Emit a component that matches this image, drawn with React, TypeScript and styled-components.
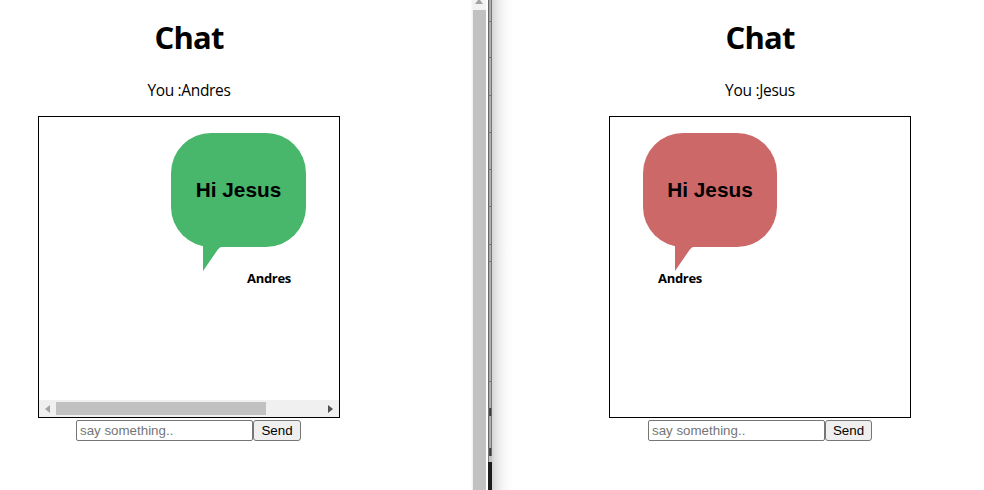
import React from 'react';
import styled, { createGlobalStyle } from 'styled-components';

const GlobalStyle = createGlobalStyle`
  * { box-sizing: border-box; }
  body { margin: 0; background: #fff; color: #000; font-family: 'Open Sans', 'Noto Sans', sans-serif; overflow: hidden; }
`;

const Desktop = styled.div`
  display: grid;
  grid-template-columns: 471px 17px 4px 492px;
  height: 490px;
  overflow: hidden;
`;

const Pane = styled.main<{ $inset: number; $shadow?: boolean }>`
  padding-left: ${p => p.$inset}px;
  background: ${p => (p.$shadow
    ? 'linear-gradient(90deg, #d4d4d4 0, #e4e4e4 4px, #f2f2f2 9px, #fbfbfb 15px, #fff 21px)'
    : '#fff')};
`;

const Column = styled.div`
  width: 302px;
  display: flex;
  flex-direction: column;
  align-items: center;
`;

const Title = styled.h1`
  margin: 15px 0 0;
  height: 44px;
  font-size: 31px;
  line-height: 44px;
  font-weight: 700;
  letter-spacing: -0.8px;
`;

const You = styled.p<{ $tracking: number }>`
  margin: 20px 0 0;
  height: 37px;
  font-size: 15.5px;
  line-height: 22px;
  letter-spacing: ${p => p.$tracking}px;
  white-space: nowrap;
`;

const ChatBox = styled.section`
  width: 302px;
  height: 302px;
  border: 1px solid #000;
  display: flex;
  flex-direction: column;
`;

const Messages = styled.div<{ $mine: boolean }>`
  flex: 1;
  display: flex;
  flex-direction: column;
  align-items: ${p => (p.$mine ? 'flex-end' : 'flex-start')};
  padding: 16px 33px 0;
`;

const Bubble = styled.div<{ $mine: boolean }>`
  position: relative;
  width: ${p => (p.$mine ? 135 : 134)}px;
  height: 114px;
  border-radius: 40px;
  background: ${p => (p.$mine ? '#48b66b' : '#cc6868')};
  color: ${p => (p.$mine ? '#48b66b' : '#cc6868')};
  display: flex;
  align-items: center;
  justify-content: center;
`;

const BubbleText = styled.span`
  color: #000;
  font: 700 20.8px/24px 'Liberation Sans', Arial, sans-serif;
  white-space: nowrap;
`;

const Tail = styled.svg`
  position: absolute;
  left: 32px;
  top: 110px;
`;

const Author = styled.span`
  margin: 21px 15px 0;
  font: 700 13px/20px 'Open Sans', 'Noto Sans', sans-serif;
  letter-spacing: -0.3px;
`;

const HorizontalBar = styled.div`
  height: 17px;
  background: #f0f0f0;
  display: grid;
  grid-template-columns: 17px 210px 1fr 17px;
  align-items: center;
  justify-items: center;
`;

const HorizontalThumb = styled.div`
  width: 210px;
  height: 13px;
  background: #c1c1c1;
`;

const Form = styled.div<{ $mine: boolean }>`
  margin: 2px ${p => (p.$mine ? 1 : 0)}px 0 0;
  display: flex;
  height: 21px;
`;

const TextInput = styled.input`
  width: 177px;
  height: 21px;
  margin: 0;
  padding: 1px 3px;
  border: 1px solid #767676;
  border-radius: 2px;
  outline: none;
  background: #fff;
  font: 13.333px 'Liberation Sans', Arial, sans-serif;
  &::placeholder { color: #757575; opacity: 1; }
`;

const SendButton = styled.button<{ $width: number }>`
  width: ${p => p.$width}px;
  height: 21px;
  margin: 0;
  padding: 0;
  border: 1px solid #767676;
  border-radius: 3px;
  background: #efefef;
  color: #000;
  font: 13.333px 'Liberation Sans', Arial, sans-serif;
`;

const VerticalBar = styled.div`
  background: #f2f2f2;
  border-right: 2px solid #fff;
  border-left: 1px solid #fafafa;
  display: flex;
  flex-direction: column;
  align-items: center;
`;

const UpCap = styled.div`
  height: 10px;
  display: flex;
  align-items: flex-start;
`;

const VerticalThumb = styled.div`
  width: 13px;
  flex: 1;
  background: #c1c1c1;
`;

const WindowEdge = styled.div`
  display: flex;
  flex-direction: column;
`;

const EdgePart = styled.div<{ $h: number; $tone?: 'dark' | 'mark' | 'pale' }>`
  flex: 0 0 ${p => p.$h}px;
  background: ${p => {
    if (p.$tone === 'dark') return '#1c1c1c';
    if (p.$tone === 'mark') return 'linear-gradient(90deg, #777 1px, #56524c 1px, #34363a 3px, #696969 3px)';
    if (p.$tone === 'pale') return 'linear-gradient(90deg, #777 1px, #c4c4c4 1px)';
    return 'linear-gradient(90deg, #666 1px, #a9a9a9 1px, #b0b0b0 3px, #777 3px)';
  }};
`;

const EdgeTick = styled.div`
  flex: 0 0 1px;
  background: #747474;
`;

const segments = [21, 35, 37, 36, 36, 36, 37, 16, 119, 26];

function BubbleTail() {
  return (
    <Tail width="22" height="29" viewBox="0 0 22 29">
      <path d="M0 0H22V3.5H19Q16.5 4 14.5 7L0 28Z" fill="currentColor" />
    </Tail>
  );
}

function Chat({ user, mine }: { user: string; mine: boolean }) {
  return (
    <Column>
      <Title>Chat</Title>
      <You $tracking={mine ? -0.35 : -0.3}>You :{user}</You>
      <ChatBox>
        <Messages $mine={mine}>
          <Bubble $mine={mine}>
            <BubbleText>Hi Jesus</BubbleText>
            <BubbleTail />
          </Bubble>
          <Author>Andres</Author>
        </Messages>
        {mine && (
          <HorizontalBar>
            <svg width="5" height="8" viewBox="0 0 5 8"><path d="M5 0V8L0 4Z" fill="#a3a3a3" /></svg>
            <HorizontalThumb />
            <span />
            <svg width="5" height="8" viewBox="0 0 5 8"><path d="M0 0V8L5 4Z" fill="#505050" /></svg>
          </HorizontalBar>
        )}
      </ChatBox>
      <Form $mine={mine}>
        <TextInput placeholder="say something.." />
        <SendButton $width={mine ? 48 : 47}>Send</SendButton>
      </Form>
    </Column>
  );
}

export default function App() {
  return (
    <>
      <GlobalStyle />
      <Desktop>
        <Pane $inset={38}><Chat user="Andres" mine /></Pane>
        <VerticalBar>
          <UpCap><svg width="8" height="4" viewBox="0 0 8 4"><path d="M3 0H5L8 4H0Z" fill="#a3a3a3" /></svg></UpCap>
          <VerticalThumb />
        </VerticalBar>
        <WindowEdge>
          {segments.map((height, index) => (
            <React.Fragment key={index}>
              <EdgePart $h={height} />
              {index < segments.length - 1 && <EdgeTick />}
            </React.Fragment>
          ))}
          <EdgePart $h={8} $tone="mark" />
          <EdgePart $h={32} />
          <EdgePart $h={8} $tone="mark" />
          <EdgePart $h={6} $tone="pale" />
          <EdgePart $h={28} $tone="dark" />
        </WindowEdge>
        <Pane $inset={117} $shadow><Chat user="Jesus" mine={false} /></Pane>
      </Desktop>
    </>
  );
}
